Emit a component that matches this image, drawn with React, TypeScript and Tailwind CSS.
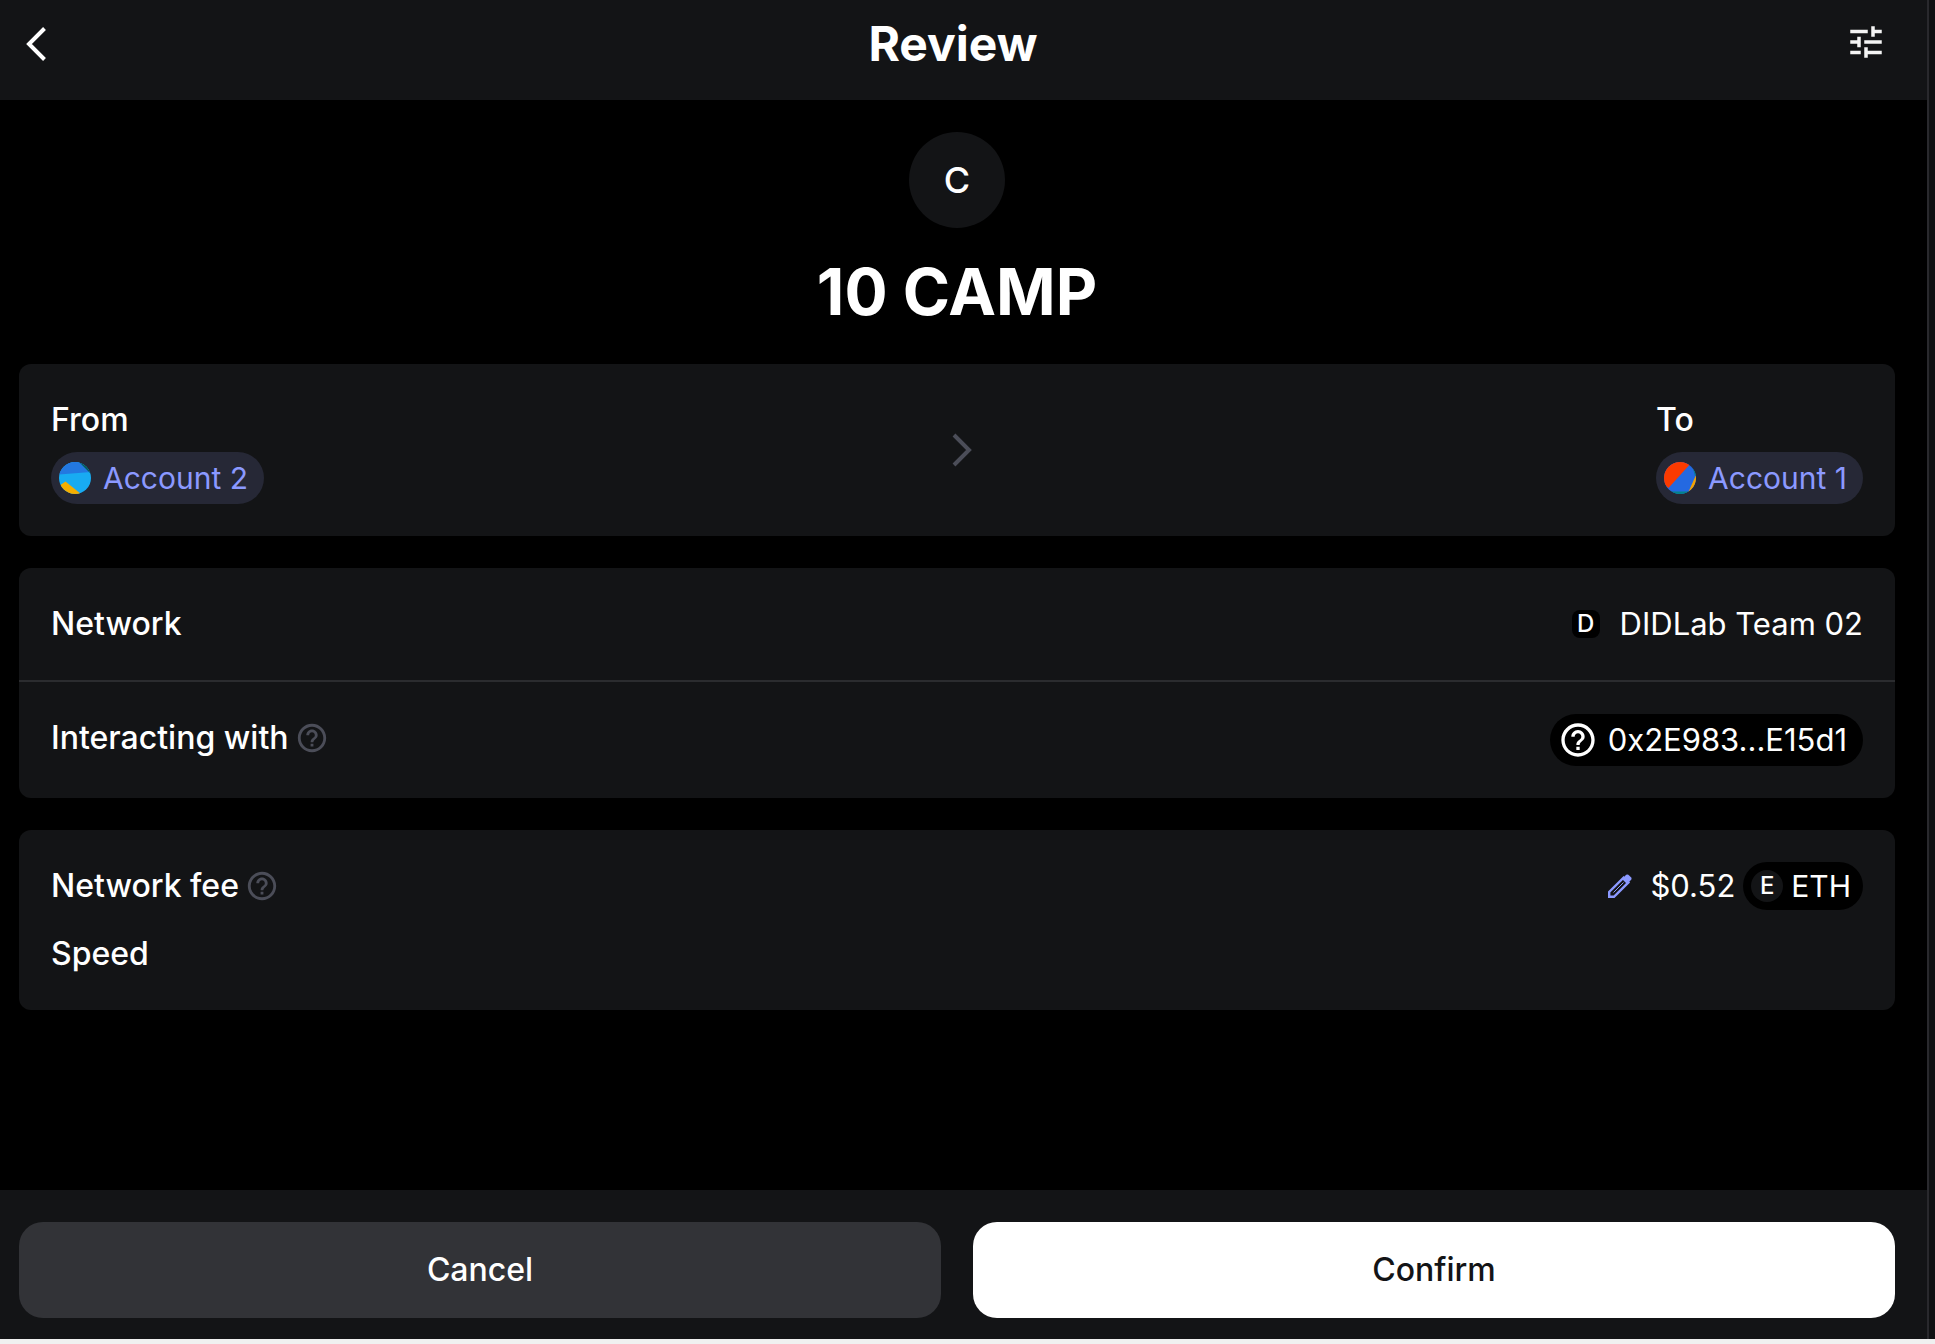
import type { ReactNode } from "react";
import { MdTune } from "react-icons/md";

function HelpIcon({ className }: { className: string }) {
  return (
    <svg viewBox="0 0 24 24" fill="currentColor" className={className} aria-hidden="true">
      <path d="M11 18h2v-2h-2v2zm1-16C6.48 2 2 6.48 2 12s4.48 10 10 10 10-4.48 10-10S17.52 2 12 2zm0 18c-4.41 0-8-3.59-8-8s3.59-8 8-8 8 3.59 8 8-3.59 8-8 8zm0-14c-2.21 0-4 1.79-4 4h2c0-1.1.9-2 2-2s2 .9 2 2c0 2-3 1.75-3 5h2c0-2.25 3-2.5 3-5 0-2.21-1.79-4-4-4z" />
    </svg>
  );
}

function BackIcon() {
  return (
    <svg viewBox="0 0 34 36" className="h-9 w-[34px]" fill="none" stroke="currentColor" strokeWidth="4" aria-hidden="true">
      <path d="M25.5 2.5 L10 18 L25.5 33.5" />
    </svg>
  );
}

function ForwardIcon() {
  return (
    <svg viewBox="0 0 24 34" className="h-[34px] w-6 text-[#4b4d58]" fill="none" stroke="currentColor" strokeWidth="4" aria-hidden="true">
      <path d="M6 2 L21 17 L6 32" />
    </svg>
  );
}

function PencilIcon() {
  return (
    <svg viewBox="0 0 24 24" className="h-6 w-6" aria-hidden="true">
      <path d="M1.2 22.8 V18 L15.6 3.6 L20.4 8.4 L6 22.8 Z" fill="none" stroke="currentColor" strokeWidth="2.4" />
      <path d="M14 5 L18.2 0.8 Q19.4 0 20.4 0.8 L23.2 3.6 Q24 4.6 23.2 5.8 L19 10 Z" fill="currentColor" />
      <path d="M5.5 18.5 L15.5 8.5" stroke="currentColor" strokeWidth="1" />
    </svg>
  );
}

function CyanAvatar() {
  return (
    <svg viewBox="0 0 32 32" className="h-8 w-8 rounded-full" aria-hidden="true">
      <rect width="32" height="32" fill="#18abf2" />
      <path d="M0 0 H32 V10 L0 12.5 Z" fill="#2378e1" />
      <path d="M20 0 L32 12 V0 Z" fill="#035e56" />
      <path d="M0 24 L6.5 19.5 L22 32 H0 Z" fill="#f5ae00" />
    </svg>
  );
}

function RedAvatar() {
  return (
    <svg viewBox="0 0 32 32" className="h-8 w-8 rounded-full" aria-hidden="true">
      <rect width="32" height="32" fill="#2469e1" />
      <path d="M0 0 H28 L4.5 26 L0 22 Z" fill="#fb3a00" />
      <path d="M0 29.5 H25 V32 H0 Z" fill="#03838a" />
      <path d="M32 13 L23.5 32 H32 Z" fill="#f5a300" />
      <path d="M28.5 5 H32 V14 H31 Z" fill="#03838a" />
    </svg>
  );
}

function AccountPill({ avatar, name }: { avatar: ReactNode; name: string }) {
  return (
    <button type="button" className="flex h-[52px] items-center gap-3 rounded-full bg-[#262836] pr-4 pl-2 text-[30px] font-normal text-[#8b99ff]">
      {avatar}
      {name}
    </button>
  );
}

function Help({ label }: { label: string }) {
  return (
    <button type="button" aria-label={label} className="text-[#4b4d58]">
      <HelpIcon className="h-[34px] w-[34px]" />
    </button>
  );
}

function Card({ children }: { children: ReactNode }) {
  return <section className="rounded-xl bg-[#131416]">{children}</section>;
}

export default function App() {
  return (
    <div className="flex min-h-screen flex-col bg-[#f0f0f0] pb-[5px] font-['Inter',sans-serif] text-[32px] leading-[48px] font-medium text-white">
      <div className="flex flex-1 bg-[#101113] pr-1.5">
        <div className="flex flex-1 flex-col border-r-2 border-[#29292d] bg-black">
          <header className="grid h-[100px] grid-cols-[1fr_auto_1fr] items-center bg-[#131416] pr-10 pb-3 pl-[19px]">
            <button type="button" aria-label="Back" className="justify-self-start">
              <BackIcon />
            </button>
            <h1 className="text-5xl font-bold">Review</h1>
            <button type="button" aria-label="Advanced settings" className="justify-self-end pb-1 text-[#f4f4f4]">
              <MdTune size={42} />
            </button>
          </header>

          <main className="flex flex-1 flex-col gap-8 pt-8 pr-8 pb-8 pl-[19px]">
            <div className="flex flex-col items-center gap-6">
              <div className="flex h-24 w-24 items-center justify-center rounded-full bg-[#131416] text-4xl">C</div>
              <h2 className="text-[64px] leading-[80px] font-bold">10 CAMP</h2>
            </div>

            <Card>
              <div className="flex items-center justify-between p-8">
                <div className="flex flex-col items-start gap-2">
                  <p>From</p>
                  <AccountPill avatar={<CyanAvatar />} name="Account 2" />
                </div>
                <ForwardIcon />
                <div className="flex flex-col items-start gap-2">
                  <p>To</p>
                  <AccountPill avatar={<RedAvatar />} name="Account 1" />
                </div>
              </div>
            </Card>

            <Card>
              <div className="flex items-center justify-between border-b-2 border-[#2b2c2f] p-8">
                <p>Network</p>
                <div className="flex items-center gap-5 text-[31px] font-normal">
                  <span className="flex h-7 w-7 items-center justify-center rounded-lg bg-black text-2xl font-medium">D</span>
                  DIDLab Team 02
                </div>
              </div>
              <div className="flex items-start justify-between p-8">
                <div className="flex items-center gap-1.5">
                  <p>Interacting with</p>
                  <Help label="About the contract" />
                </div>
                <button type="button" className="flex h-[52px] items-center gap-2.5 rounded-full bg-black pr-4 pl-2 text-[31px] font-normal">
                  <HelpIcon className="h-10 w-10" />
                  0x2E983...E15d1
                </button>
              </div>
            </Card>

            <Card>
              <div className="flex flex-col gap-5 p-8">
                <div className="flex items-center justify-between">
                  <div className="flex items-center gap-1.5">
                    <p>Network fee</p>
                    <Help label="About the network fee" />
                  </div>
                  <div className="flex items-center gap-2 text-[31px] font-normal">
                    <button type="button" aria-label="Edit fee" className="pr-2.5 text-[#8b99ff]">
                      <PencilIcon />
                    </button>
                    $0.52
                    <button type="button" className="flex h-12 items-center gap-2 rounded-full bg-black pr-3 pl-2 text-[30px]">
                      <span className="flex h-8 w-8 items-center justify-center rounded-full bg-[#131416] text-2xl font-medium">E</span>
                      ETH
                    </button>
                  </div>
                </div>
                <p>Speed</p>
              </div>
            </Card>
          </main>

          <footer className="grid grid-cols-2 gap-8 bg-[#131416] pt-8 pr-8 pb-[21px] pl-[19px]">
            <button type="button" className="h-24 rounded-3xl bg-[#323337]">Cancel</button>
            <button type="button" className="h-24 rounded-3xl bg-white text-[#131416]">Confirm</button>
          </footer>
        </div>
      </div>
    </div>
  );
}
